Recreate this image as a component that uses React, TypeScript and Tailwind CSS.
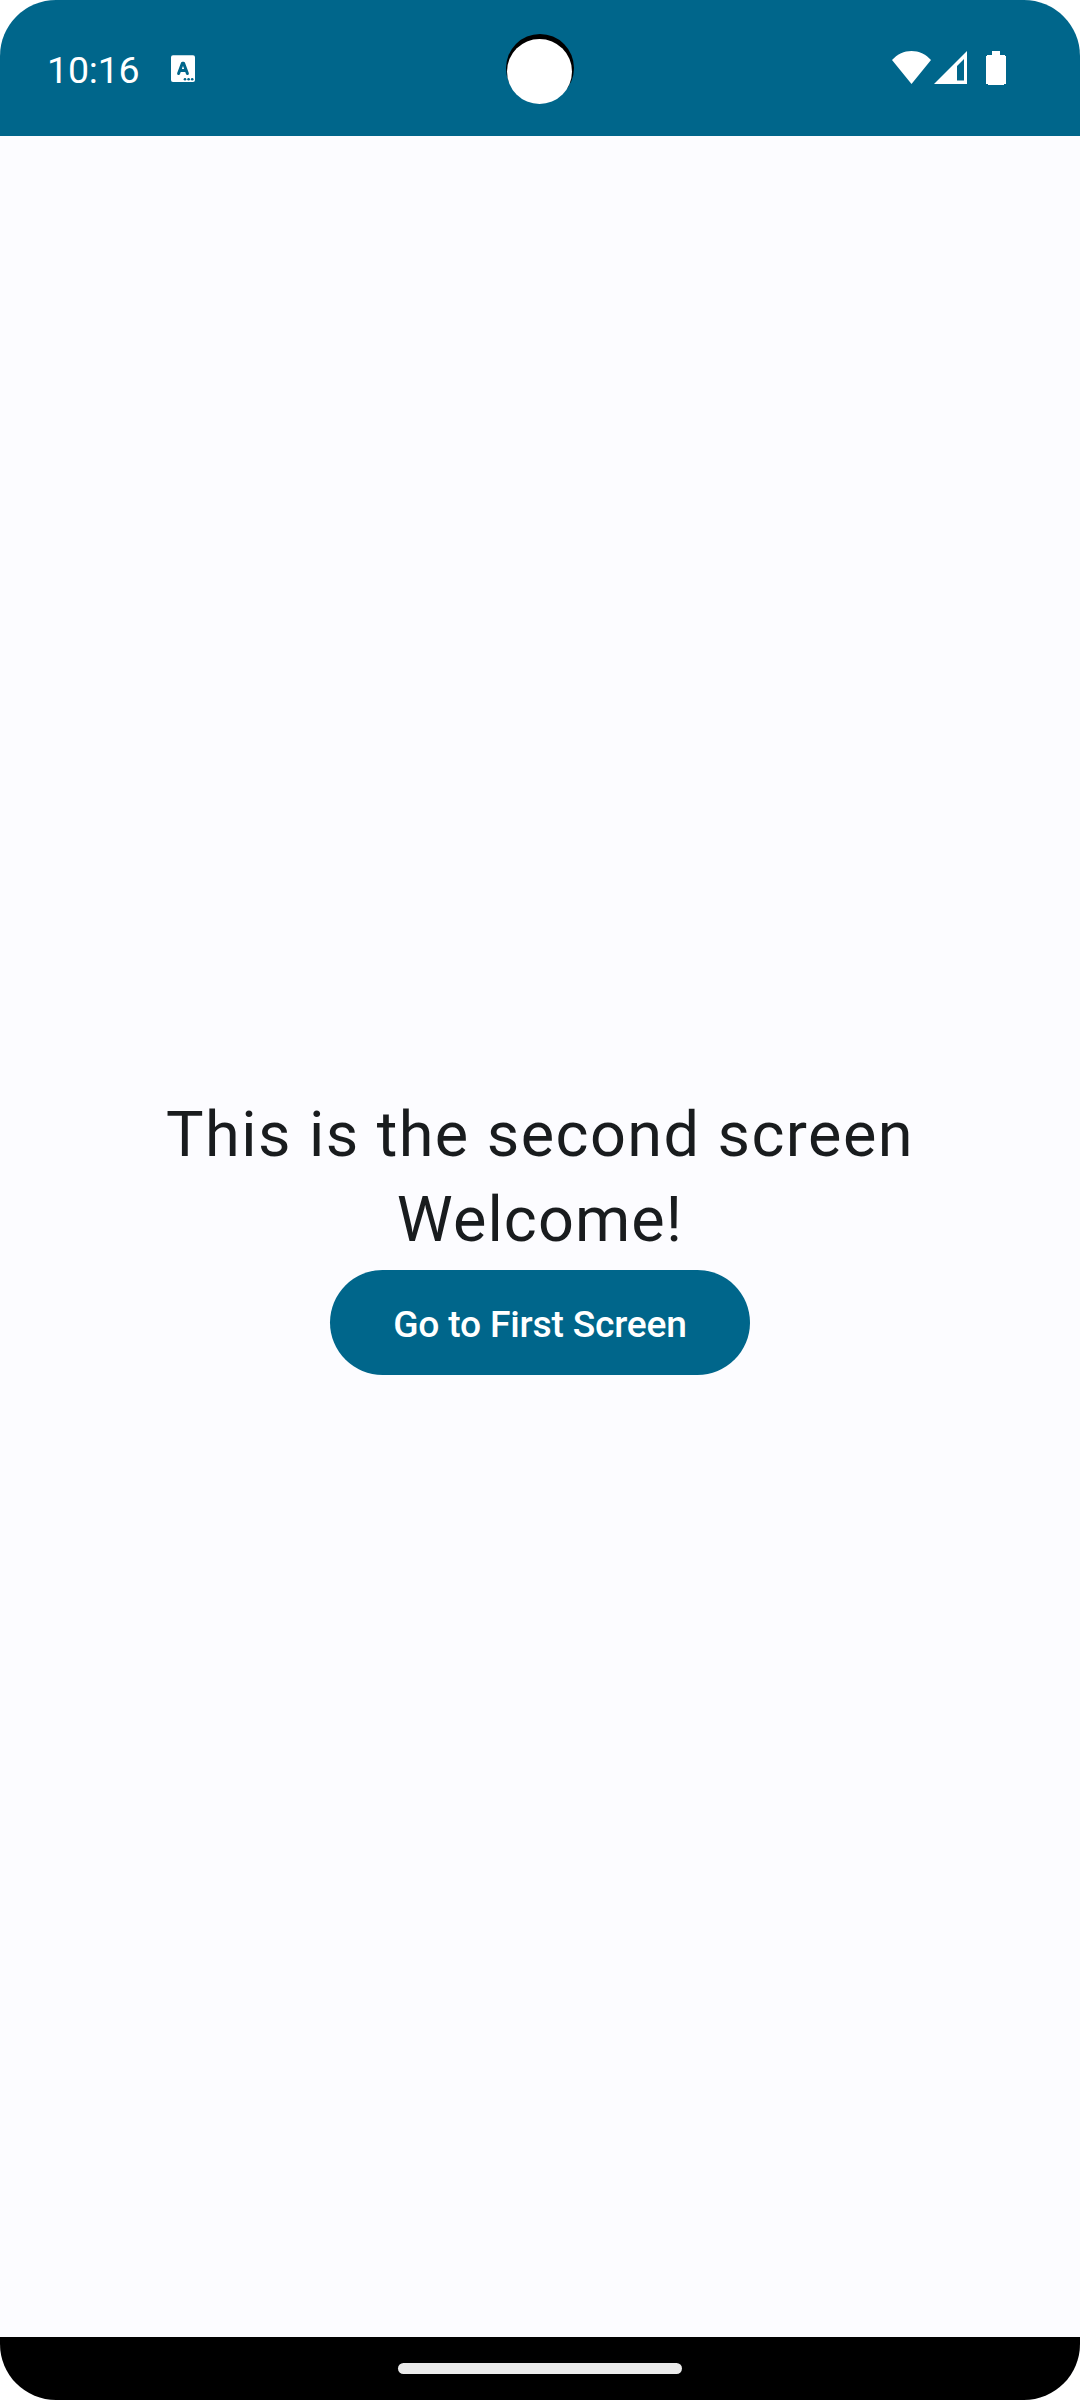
function NotificationIcon() {
  return (
    <svg className="h-[27px] w-6" viewBox="0 0 24 27" aria-hidden="true">
      <rect x="0" y="0.300" width="24" height="26.700" rx="2" fill="#fff" />
      <path d="M7.600 18.500L11.400 8.300H12.600L16.400 18.500M9.500 15.500H14.500" fill="none" stroke="#00668b" strokeWidth="3" strokeLinecap="round" strokeLinejoin="round" />
      <g fill="#00668b">
        <circle cx="14" cy="24.200" r="1.300" />
        <circle cx="17.600" cy="24.200" r="1.300" />
        <circle cx="21.200" cy="24.200" r="1.300" />
      </g>
    </svg>
  );
}

function WifiIcon() {
  return (
    <svg className="h-[33px] w-[39px]" viewBox="0 0 39 33" aria-hidden="true">
      <path d="M0 9C5.500 3 12 0 19.500 0S33.500 3 39 9L19.500 33Z" fill="#fff" />
    </svg>
  );
}

function SignalIcon() {
  return (
    <svg className="h-[33px] w-[33px]" viewBox="0 0 33 33" aria-hidden="true">
      <path d="M33 0V33H0ZM30 8L23 15V29.500H30Z" fill="#fff" fillRule="evenodd" />
    </svg>
  );
}

function BatteryIcon() {
  return (
    <svg className="h-[34px] w-5" viewBox="0 0 20 34" aria-hidden="true">
      <path d="M6 0H14V4H19V5H20V33H18V34H2V33H0V5H1V4H6Z" fill="#fff" />
    </svg>
  );
}

export default function App() {
  return (
    <div className="h-[2400px] w-[1080px] bg-white font-['Roboto',sans-serif]">
      <div className="flex h-full flex-col overflow-hidden rounded-[56px] bg-[#fcfcff]">
        <header className="relative flex h-[136px] shrink-0 items-start bg-[#00668b] text-white">
          <span className="ml-[47px] mt-[48px] w-[124px] text-[37.5px] leading-[44px] tracking-[-0.2px]">10:16</span>
          <div className="mt-[55px]"><NotificationIcon /></div>
          <div className="absolute left-[506px] top-[34px] size-[68px] rounded-full bg-black" />
          <div className="absolute left-[506.5px] top-[38.5px] size-[65.5px] rounded-full bg-white" />
          <div className="ml-auto mr-[74px] mt-[51px] flex">
            <WifiIcon />
            <div className="ml-[3px]"><SignalIcon /></div>
            <div className="ml-[19px]"><BatteryIcon /></div>
          </div>
        </header>
        <main className="flex flex-1 flex-col items-center pt-[956px]">
          <p className="text-center text-[63px] leading-[85px] tracking-[1.43px] text-[#191c1e]">
            This is the second screen
            <br />
            <span className="tracking-[1.1px]">Welcome!</span>
          </p>
          <button className="mt-2 flex h-[105px] w-[420px] items-center justify-center rounded-full bg-[#00668b] pt-[5px] text-[37.2px] font-medium tracking-[-0.2px] text-white">
            Go to First Screen
          </button>
        </main>
        <footer className="flex h-[63px] shrink-0 justify-center bg-black pt-[26px]">
          <div className="h-[11px] w-[284px] rounded-full bg-[#ebebeb]" />
        </footer>
      </div>
    </div>
  );
}
